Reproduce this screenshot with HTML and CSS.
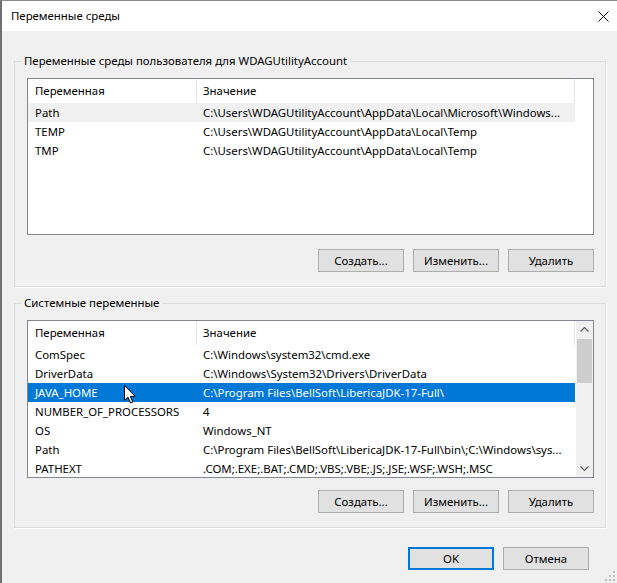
FILE: index.html
```html
<!DOCTYPE html>
<html lang="ru">

<head>
    <meta charset="UTF-8">
    <title>Переменные среды</title>
    <link rel="stylesheet" href="styles.css">
</head>

<body>
    <div class="window">
        <div class="titlebar">
            <span class="title">Переменные среды</span>
            <svg class="close-icon" width="11" height="11" viewBox="0 0 11 11">
                <path d="M0.5 0.5 L10.5 10.5 M10.5 0.5 L0.5 10.5" stroke="#000" stroke-width="1" fill="none" />
            </svg>
        </div>

        <div class="content">
            <fieldset class="group">
                <legend>Переменные среды пользователя для WDAGUtilityAccount</legend>
                <div class="listview user-list">
                    <div class="lv-body">
                        <div class="lv-head">
                            <span class="cell name">Переменная</span>
                            <span class="cell value">Значение</span>
                        </div>
                        <div class="lv-row inactive-selected">
                            <span class="cell name">Path</span>
                            <span class="cell value">C:\Users\WDAGUtilityAccount\AppData\Local\Microsoft\Windows...</span>
                        </div>
                        <div class="lv-row">
                            <span class="cell name">TEMP</span>
                            <span class="cell value">C:\Users\WDAGUtilityAccount\AppData\Local\Temp</span>
                        </div>
                        <div class="lv-row">
                            <span class="cell name">TMP</span>
                            <span class="cell value">C:\Users\WDAGUtilityAccount\AppData\Local\Temp</span>
                        </div>
                    </div>
                </div>
                <div class="button-row">
                    <button>Создать...</button>
                    <button>Изменить...</button>
                    <button>Удалить</button>
                </div>
            </fieldset>

            <fieldset class="group second">
                <legend>Системные переменные</legend>
                <div class="listview system-list">
                    <div class="lv-body">
                        <div class="lv-head">
                            <span class="cell name">Переменная</span>
                            <span class="cell value">Значение</span>
                        </div>
                        <div class="lv-row">
                            <span class="cell name">ComSpec</span>
                            <span class="cell value">C:\Windows\system32\cmd.exe</span>
                        </div>
                        <div class="lv-row">
                            <span class="cell name">DriverData</span>
                            <span class="cell value">C:\Windows\System32\Drivers\DriverData</span>
                        </div>
                        <div class="lv-row selected">
                            <span class="cell name">JAVA_HOME</span>
                            <span class="cell value">C:\Program Files\BellSoft\LibericaJDK-17-Full\</span>
                        </div>
                        <div class="lv-row">
                            <span class="cell name">NUMBER_OF_PROCESSORS</span>
                            <span class="cell value">4</span>
                        </div>
                        <div class="lv-row">
                            <span class="cell name">OS</span>
                            <span class="cell value">Windows_NT</span>
                        </div>
                        <div class="lv-row">
                            <span class="cell name">Path</span>
                            <span class="cell value">C:\Program Files\BellSoft\LibericaJDK-17-Full\bin\;C:\Windows\sys...</span>
                        </div>
                        <div class="lv-row">
                            <span class="cell name">PATHEXT</span>
                            <span class="cell value">.COM;.EXE;.BAT;.CMD;.VBS;.VBE;.JS;.JSE;.WSF;.WSH;.MSC</span>
                        </div>
                    </div>
                    <div class="scrollbar">
                        <svg class="arrow" width="17" height="17" viewBox="0 0 17 17">
                            <path d="M4.5 10.5 L8.5 6.5 L12.5 10.5" stroke="#606060" stroke-width="1.2" fill="none" />
                        </svg>
                        <div class="track">
                            <div class="thumb"></div>
                        </div>
                        <svg class="arrow" width="17" height="17" viewBox="0 0 17 17">
                            <path d="M4.5 6.5 L8.5 10.5 L12.5 6.5" stroke="#606060" stroke-width="1.2" fill="none" />
                        </svg>
                    </div>
                    <svg class="cursor" width="13" height="19" viewBox="0 0 13 19">
                        <path d="M0.5 0.5 L0.5 15.5 L4 12.2 L6.6 18 L8.8 17 L6.3 11.4 L11.2 11.4 Z" fill="#fff" stroke="#000" stroke-width="1" stroke-linejoin="round" />
                    </svg>
                </div>
                <div class="button-row">
                    <button>Создать...</button>
                    <button>Изменить...</button>
                    <button>Удалить</button>
                </div>
            </fieldset>

            <div class="dialog-buttons">
                <button class="default">OK</button>
                <button>Отмена</button>
            </div>
        </div>

        <svg class="grip" width="10" height="10" viewBox="0 0 10 10">
            <rect x="8" y="0" width="2" height="2" fill="#bcbcbc" />
            <rect x="4" y="4" width="2" height="2" fill="#bcbcbc" />
            <rect x="8" y="4" width="2" height="2" fill="#bcbcbc" />
            <rect x="0" y="8" width="2" height="2" fill="#bcbcbc" />
            <rect x="4" y="8" width="2" height="2" fill="#bcbcbc" />
            <rect x="8" y="8" width="2" height="2" fill="#bcbcbc" />
        </svg>
    </div>
</body>

</html>
```

FILE: styles.css
```css
body {
    margin: 0;
    font-family: "Noto Sans", "Open Sans", sans-serif;
    font-size: 11.4px;
    color: #000;
    background: #f0f0f0;
}

.window {
    position: relative;
    width: 617px;
    height: 583px;
    box-sizing: border-box;
    border-top: 1px solid #8a8a8a;
    border-left: 2px solid #707070;
    background: #f0f0f0;
    overflow: hidden;
}

.titlebar {
    height: 30px;
    background: #fff;
    display: flex;
    align-items: center;
    justify-content: space-between;
    padding: 0 8px 0 9px;
}

.title {
    line-height: 16px;
}

.content {
    padding: 22px 11px 0 12px;
}

.group {
    margin: 0;
    padding: 9px 11px 14px 12px;
    border: 1px solid #dcdcdc;
    box-shadow: 1px 1px 0 #fff;
    min-width: 0;
}

.group.second {
    margin-top: 8px;
    padding-bottom: 14px;
}

.group legend {
    margin-left: -6px;
    padding: 0 3px;
    line-height: 16px;
}

.listview {
    position: relative;
    display: flex;
    background: #fff;
    border: 1px solid #828790;
    overflow: hidden;
}

.user-list {
    height: 155px;
}

.system-list {
    height: 156px;
}

.lv-body {
    width: 547px;
    flex: none;
}

.lv-head,
.lv-row {
    display: grid;
    grid-template-columns: 169px 1fr;
    white-space: nowrap;
}

.lv-head {
    height: 24px;
    line-height: 23px;
}

.lv-head .cell {
    border-right: 1px solid #e5e5e5;
}

.lv-row {
    height: 19px;
    line-height: 19px;
}

.cell {
    overflow: hidden;
}

.cell.name {
    padding-left: 7px;
}

.cell.value {
    padding-left: 6px;
}

.lv-row.inactive-selected {
    background: #f0f0f0;
}

.lv-row.selected {
    background: #0078d7;
    color: #fff;
}

.scrollbar {
    width: 17px;
    margin-left: 1px;
    background: #f0f0f0;
    display: flex;
    flex-direction: column;
}

.scrollbar .arrow {
    display: block;
    flex: none;
}

.track {
    flex: 1;
}

.thumb {
    margin: 1px 1px 0;
    height: 44px;
    background: #cdcdcd;
}

.cursor {
    position: absolute;
    left: 96px;
    top: 64px;
}

.button-row {
    display: flex;
    justify-content: flex-end;
    gap: 9px;
    margin-top: 14px;
}

.group.second .button-row {
    margin-top: 12px;
}

button {
    width: 86px;
    height: 23px;
    padding: 0;
    font-family: inherit;
    font-size: 11.4px;
    color: #000;
    background: #e1e1e1;
    border: 1px solid #adadad;
}

.dialog-buttons {
    display: flex;
    justify-content: flex-end;
    gap: 9px;
    margin-top: 19px;
    padding-right: 17px;
}

button.default {
    border: 2px solid #0078d7;
}

.grip {
    position: absolute;
    right: 2px;
    bottom: 2px;
}
```
